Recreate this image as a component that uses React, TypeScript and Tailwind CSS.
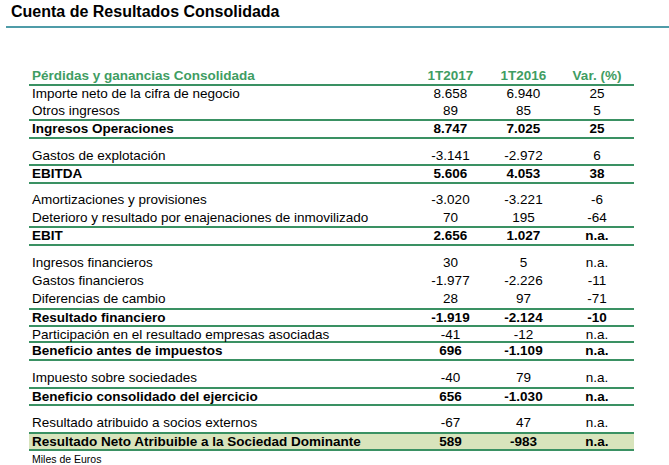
type Row = {
  label?: string;
  a?: string;
  b?: string;
  c?: string;
  h: string; // row height class, border included
  bold?: boolean;
  line?: boolean;
  hl?: boolean;
  spacer?: boolean;
};

// Cuenta de resultados — alturas tomadas de la captura, líneas verdes como borde inferior.
const rows: Row[] = [
  { label: "Importe neto de la cifra de negocio", a: "8.658", b: "6.940", c: "25", h: "h-[16px]" },
  { label: "Otros ingresos", a: "89", b: "85", c: "5", h: "h-[19px]", line: true },
  { label: "Ingresos Operaciones", a: "8.747", b: "7.025", c: "25", h: "h-[18px]", bold: true, line: true },
  { spacer: true, h: "h-[9px]" },
  { label: "Gastos de explotación", a: "-3.141", b: "-2.972", c: "6", h: "h-[18px]", line: true },
  { label: "EBITDA", a: "5.606", b: "4.053", c: "38", h: "h-[18px]", bold: true, line: true },
  { spacer: true, h: "h-[7px]" },
  { label: "Amortizaciones y provisiones", a: "-3.020", b: "-3.221", c: "-6", h: "h-[18px]" },
  {
    label: "Deterioro y resultado por enajenaciones de inmovilizado",
    a: "70",
    b: "195",
    c: "-64",
    h: "h-[19px]",
    line: true,
  },
  { label: "EBIT", a: "2.656", b: "1.027", c: "n.a.", h: "h-[18px]", bold: true, line: true },
  { spacer: true, h: "h-[8px]" },
  { label: "Ingresos financieros", a: "30", b: "5", c: "n.a.", h: "h-[18px]" },
  { label: "Gastos financieros", a: "-1.977", b: "-2.226", c: "-11", h: "h-[18px]" },
  { label: "Diferencias de cambio", a: "28", b: "97", c: "-71", h: "h-[20px]", line: true },
  { label: "Resultado financiero", a: "-1.919", b: "-2.124", c: "-10", h: "h-[17px]", bold: true, line: true },
  {
    label: "Participación en el resultado empresas asociadas",
    a: "-41",
    b: "-12",
    c: "n.a.",
    h: "h-[16px]",
    line: true,
  },
  { label: "Beneficio antes de impuestos", a: "696", b: "-1.109", c: "n.a.", h: "h-[18px]", bold: true, line: true },
  { spacer: true, h: "h-[8px]" },
  { label: "Impuesto sobre sociedades", a: "-40", b: "79", c: "n.a.", h: "h-[20px]", line: true },
  {
    label: "Beneficio consolidado del ejercicio",
    a: "656",
    b: "-1.030",
    c: "n.a.",
    h: "h-[17px]",
    bold: true,
    line: true,
  },
  { spacer: true, h: "h-[8px]" },
  { label: "Resultado atribuido a socios externos", a: "-67", b: "47", c: "n.a.", h: "h-[20px]", line: true },
  {
    label: "Resultado Neto Atribuible a la Sociedad Dominante",
    a: "589",
    b: "-983",
    c: "n.a.",
    h: "h-[17px]",
    bold: true,
    line: true,
    hl: true,
  },
];

const cols = "grid grid-cols-[385px_73px_73px_74px]";

export default function App() {
  return (
    <div className="w-[669px] h-[465px] overflow-hidden bg-white text-black font-['Liberation_Sans',Arial,sans-serif]">
      <div className="pt-[4px] pl-[11px] text-[16px] leading-[16px] font-bold">Cuenta de Resultados Consolidada</div>
      <div className="mt-[6px] ml-[6px] h-[2px] bg-[#4f9ca8]" />

      <div className="ml-[29px] mt-[36px] w-[605px] text-[13.5px] leading-[16px]">
        <div className={`${cols} h-[22px] items-end border-b-2 border-[#3a9163] font-bold text-[#3f9d63]`}>
          <div className="pl-[3px]">Pérdidas y ganancias Consolidada</div>
          <div className="text-center">1T2017</div>
          <div className="text-center">1T2016</div>
          <div className="text-center">Var. (%)</div>
        </div>

        {rows.map((r, i) =>
          r.spacer ? (
            <div key={i} className={r.h} />
          ) : (
            <div
              key={i}
              className={`${cols} ${r.h} items-center ${r.line ? "border-b-2 border-[#3a9163]" : ""} ${
                r.bold ? "font-bold" : ""
              } ${r.hl ? "bg-[#d8e4bc]" : ""}`}
            >
              <div className="pl-[3px] whitespace-nowrap">{r.label}</div>
              <div className="text-center">{r.a}</div>
              <div className="text-center">{r.b}</div>
              <div className="text-center">{r.c}</div>
            </div>
          ),
        )}

        <div className="pl-[3px] pt-[2px] text-[10.5px] leading-[12px]">Miles de Euros</div>
      </div>
    </div>
  );
}
